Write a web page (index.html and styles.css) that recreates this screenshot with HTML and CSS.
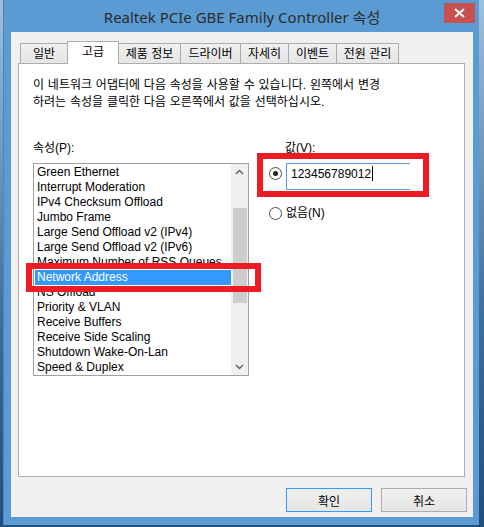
FILE: index.html
```html
<!DOCTYPE html>
<html lang="ko">
<head>
  <meta charset="UTF-8">
  <title>Realtek PCIe GBE Family Controller 속성</title>
  <link rel="stylesheet" href="styles.css">
</head>
<body>

<div class="window">
  <div class="titlebar">
    <span></span>
    <span class="title">Realtek PCIe GBE Family Controller 속성</span>
    <button class="close">
      <svg width="11" height="10" viewBox="0 0 11 10"><path d="M1 1 L10 9 M10 1 L1 9" stroke="#fff" stroke-width="2"/></svg>
    </button>
  </div>

  <div class="client">
    <div class="tabs">
      <div class="tab t1">일반</div>
      <div class="tab t2 active">고급</div>
      <div class="tab t3">제품 정보</div>
      <div class="tab t4">드라이버</div>
      <div class="tab t5">자세히</div>
      <div class="tab t6">이벤트</div>
      <div class="tab t7">전원 관리</div>
    </div>

    <div class="panel">
      <p class="desc">이 네트워크 어댑터에 다음 속성을 사용할 수 있습니다. 왼쪽에서 변경<br>하려는 속성을 클릭한 다음 오른쪽에서 값을 선택하십시오.</p>

      <div class="props">
        <div class="left">
          <div class="label">속성(P):</div>
          <div class="listbox">
            <ul class="items">
              <li>Green Ethernet</li>
              <li>Interrupt Moderation</li>
              <li>IPv4 Checksum Offload</li>
              <li>Jumbo Frame</li>
              <li>Large Send Offload v2 (IPv4)</li>
              <li>Large Send Offload v2 (IPv6)</li>
              <li>Maximum Number of RSS Queues</li>
              <li class="selected">Network Address</li>
              <li>NS Offload</li>
              <li>Priority &amp; VLAN</li>
              <li>Receive Buffers</li>
              <li>Receive Side Scaling</li>
              <li>Shutdown Wake-On-Lan</li>
              <li>Speed &amp; Duplex</li>
            </ul>
            <div class="scrollbar">
              <div class="arrow">
                <svg width="17" height="17" viewBox="0 0 17 17"><path d="M5 10 L8.5 6.5 L12 10" fill="none" stroke="#606060" stroke-width="1.4"/></svg>
              </div>
              <div class="track"><div class="thumb"></div></div>
              <div class="arrow">
                <svg width="17" height="17" viewBox="0 0 17 17"><path d="M5 7 L8.5 10.5 L12 7" fill="none" stroke="#606060" stroke-width="1.4"/></svg>
              </div>
            </div>
          </div>
        </div>

        <div class="right">
          <div class="label value-label">값(V):</div>
          <div class="radio-row">
            <span class="radio checked"></span>
            <div class="textbox">123456789012<span class="caret"></span></div>
          </div>
          <div class="radio-row none-row">
            <span class="radio"></span>
            <span class="radio-text">없음(N)</span>
          </div>
        </div>
      </div>
    </div>

    <div class="buttons">
      <button class="btn default">확인</button>
      <button class="btn">취소</button>
    </div>
  </div>
</div>

<div class="mark mark-list"></div>
<div class="mark mark-value"></div>

</body>
</html>
```

FILE: styles.css
```css
body {
  margin: 0;
  width: 484px;
  height: 527px;
  overflow: hidden;
  position: relative;
  font-family: 'Liberation Sans', 'Noto Sans CJK KR', sans-serif;
  font-size: 12px;
  color: #000;
  background: linear-gradient(to bottom, #9ec0dc, #3d6f9c 60%, #1f4f7c);
}

.window {
  box-sizing: border-box;
  margin-left: 3px;
  width: 476px;
  height: 525px;
  background-color: #5b9bd3;
  border-left: 1px solid #4a86bd;
  padding: 0 6px 8px 7px;
}

.titlebar {
  height: 32px;
  display: grid;
  grid-template-columns: 1fr auto 1fr;
}

.title {
  font-family: 'Noto Sans', 'Noto Sans CJK KR', sans-serif;
  font-size: 15px;
  line-height: 32px;
  padding-top: 1px;
  color: #2b2b2b;
  white-space: nowrap;
}

.close {
  justify-self: end;
  align-self: start;
  margin: 3px -2px 0 0;
  width: 31px;
  height: 20px;
  padding: 0;
  border: none;
  background-color: #c75050;
  display: flex;
  align-items: center;
  justify-content: center;
}

.client {
  box-sizing: border-box;
  height: 485px;
  background-color: #f0f0f0;
  padding: 9px 8px 0 7px;
}

/* tabs */
.tabs {
  display: flex;
  align-items: flex-end;
  height: 23px;
  padding-left: 2px;
  margin-bottom: -1px;
  position: relative;
  z-index: 1;
}

.tab {
  box-sizing: border-box;
  height: 20px;
  margin-bottom: 1px;
  margin-left: -1px;
  padding-top: 1px;
  border: 1px solid #acacac;
  border-bottom: none;
  background: linear-gradient(to bottom, #f0f0f0, #e5e5e5);
  text-align: center;
  line-height: 18px;
  white-space: nowrap;
}

.tab:first-child {
  margin-left: 0;
}

.tab.active {
  height: 23px;
  margin-bottom: 0;
  background: #fff;
  line-height: 19px;
  position: relative;
  z-index: 2;
}

.t1 { width: 48px; }
.t2 { width: 52px; }
.t3 { width: 63px; }
.t4 { width: 61px; }
.t5 { width: 49px; }
.t6 { width: 49px; }
.t7 { width: 63px; }

.panel {
  box-sizing: border-box;
  height: 414px;
  background-color: #fff;
  border: 1px solid #acacac;
  padding: 13px 14px 0 14px;
}

.desc {
  margin: 0;
  line-height: 17px;
  white-space: nowrap;
  word-spacing: 0.5px;
}

.props {
  display: flex;
  margin-top: 29px;
}

.label {
  line-height: 16px;
  margin-bottom: 7px;
}

.left {
  width: 216px;
}

.listbox {
  box-sizing: border-box;
  height: 213px;
  border: 1px solid #a0a0a0;
  display: flex;
}

.items {
  flex: 1;
  margin: 0;
  padding: 1px 0 0 1px;
  list-style: none;
  overflow: hidden;
}

.items li {
  height: 15px;
  line-height: 15px;
  padding-left: 2px;
  white-space: nowrap;
  overflow: hidden;
}

.items li.selected {
  background-color: #3399ff;
  color: #fff;
}

.scrollbar {
  width: 17px;
  display: flex;
  flex-direction: column;
  background-color: #f0f0f0;
}

.arrow {
  height: 17px;
}

.arrow svg {
  display: block;
}

.track {
  flex: 1;
}

.thumb {
  margin: 27px 1px 0 2px;
  height: 95px;
  background-color: #cdcdcd;
}

.right {
  margin-left: 20px;
}

.value-label {
  padding-left: 16px;
}

.radio-row {
  display: flex;
  align-items: flex-start;
}

.radio {
  box-sizing: border-box;
  width: 13px;
  height: 13px;
  margin-top: 4px;
  border: 1px solid #4d4d4d;
  border-radius: 50%;
  background-color: #fff;
  display: flex;
  align-items: center;
  justify-content: center;
}

.radio.checked::after {
  content: '';
  width: 5px;
  height: 5px;
  border-radius: 50%;
  background-color: #222;
}

.textbox {
  box-sizing: border-box;
  margin-left: 4px;
  width: 124px;
  height: 27px;
  border: 1px solid #569de5;
  border-right: none;
  padding: 2px 0 0 4px;
  line-height: 16px;
  display: flex;
  align-items: flex-start;
}

.caret {
  width: 1px;
  height: 15px;
  margin-left: 1px;
  background-color: #000;
}

.none-row {
  margin-top: 15px;
  align-items: center;
}

.none-row .radio {
  margin-top: 0;
}

.radio-text {
  margin-left: 4px;
  line-height: 16px;
}

/* buttons */
.buttons {
  display: flex;
  justify-content: flex-end;
  gap: 9px;
  margin: 11px -2px 0 0;
}

.btn {
  box-sizing: border-box;
  width: 86px;
  height: 24px;
  padding: 0;
  font-family: 'Liberation Sans', 'Noto Sans CJK KR', sans-serif;
  font-size: 12px;
  color: #000;
  background: linear-gradient(to bottom, #f0f0f0, #e5e5e5);
  border: 1px solid #acacac;
}

.btn.default {
  border-color: #3399ff;
}

/* red annotation boxes */
.mark {
  position: absolute;
  box-sizing: border-box;
  border: 6px solid #ed1c24;
}

.mark-list {
  left: 26px;
  top: 263px;
  width: 235px;
  height: 29px;
}

.mark-value {
  left: 257px;
  top: 153px;
  width: 172px;
  height: 44px;
}
```
